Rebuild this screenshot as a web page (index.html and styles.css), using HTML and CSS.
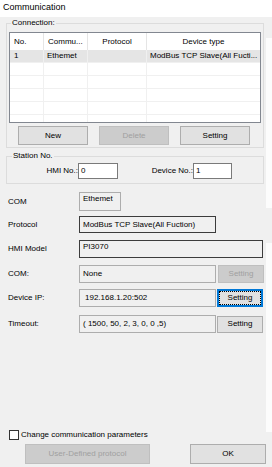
FILE: index.html
```html
<!DOCTYPE html>
<html>
<head>
<meta charset="utf-8">
<link rel="stylesheet" href="styles.css">
</head>
<body>
<div class="title">Communication</div>

<section class="group conn">
  <div class="group-label">Connection:</div>
  <div class="list">
    <div class="lrow head"><span>No.</span><span>Commu...</span><span class="center">Protocol</span><span class="center">Device type</span></div>
    <div class="lrow sel"><span>1</span><span>Ethemet</span><span></span><span>ModBus TCP Slave(All Fucti...</span></div>
    <div class="lrow"><span></span><span></span><span></span><span></span></div>
    <div class="lrow"><span></span><span></span><span></span><span></span></div>
    <div class="lrow"><span></span><span></span><span></span><span></span></div>
    <div class="lrow"><span></span><span></span><span></span><span></span></div>
    <div class="lrow"><span></span><span></span><span></span><span></span></div>
  </div>
  <div class="btn-row">
    <button class="btn">New</button>
    <button class="btn" disabled>Delete</button>
    <button class="btn">Setting</button>
  </div>
</section>

<section class="group station">
  <div class="group-label">Station No.</div>
  <div class="station-row">
    <span class="st-label st-hmi">HMI No.:</span>
    <span class="input in-hmi">0</span>
    <span class="st-label st-dev">Device No.:</span>
    <span class="input in-dev">1</span>
  </div>
</section>

<div class="form">
  <div class="frow r1"><span class="lbl">COM</span><span class="box top w-com">Ethemet</span></div>
  <div class="frow r2"><span class="lbl">Protocol</span><span class="box dark w-mid h17">ModBus TCP Slave(All Fuction)</span></div>
  <div class="frow r3"><span class="lbl">HMI Model</span><span class="box dark top w-full">PI3070</span></div>
  <div class="frow r4"><span class="lbl">COM:</span><span class="box w-mid">None</span><button class="btn sbtn" disabled>Setting</button></div>
  <div class="frow r5"><span class="lbl">Device IP:</span><span class="box w-mid ip">192.168.1.20:502</span><button class="btn sbtn focus"><span class="focus-in">Setting</span></button></div>
  <div class="frow r6"><span class="lbl">Timeout:</span><span class="box w-mid">( 1500, 50, 2, 3, 0, 0 ,5)</span><button class="btn sbtn small">Setting</button></div>
</div>

<div class="bottom">
  <label class="check-row"><span class="check"></span><span>Change communication parameters</span></label>
  <div class="bottom-btns">
    <button class="btn btn-user" disabled>User-Defined protocol</button>
    <button class="btn btn-ok">OK</button>
  </div>
</div>
</body>
</html>
```

FILE: styles.css
```css
* { box-sizing: border-box; }

body {
  margin: 0;
  width: 272px;
  height: 467px;
  overflow: hidden;
  display: flex;
  flex-direction: column;
  font-family: "Liberation Sans", Arial, sans-serif;
  font-size: 8px;
  line-height: 1;
  color: #000;
  background-color: #f0f0f0;
  background-image: linear-gradient(#fcfcfc, #fcfcfc), linear-gradient(#fcfcfc, #fcfcfc);
  background-size: 6px 170px, 6px 189px;
  background-position: 266px 38px, 266px 243px;
  background-repeat: no-repeat;
}

.title {
  height: 17px;
  flex: none;
  background: #fff;
  padding-left: 3px;
  font-size: 9px;
  line-height: 14px;
}

.group {
  flex: none;
  margin-left: 6px;
  width: 258px;
  border: 1px solid #dcdcdc;
}

.group-label {
  width: max-content;
  height: 10px;
  line-height: 10px;
  margin: -6px 0 0 4px;
  padding: 0 1px;
  background: #f0f0f0;
}

.conn {
  margin-top: 6px;
  padding-bottom: 2px;
}

.list {
  margin: 4px 0 0 2px;
  width: 252px;
  height: 91px;
  border: 1px solid #828790;
  background: #fff;
  overflow: hidden;
}

.lrow {
  display: grid;
  grid-template-columns: 34px 44px 59px 113px;
  height: 13px;
  border-bottom: 1px solid #f0f0f0;
}

.lrow > span {
  border-right: 1px solid #f0f0f0;
  padding-left: 4px;
  line-height: 12px;
  white-space: nowrap;
  overflow: hidden;
}

.lrow > span:last-child { border-right: none; padding-left: 3px; }

.lrow.head {
  height: 17px;
  border-bottom: none;
}

.lrow.head > span {
  line-height: 17px;
  border-right-color: #e5e5e5;
}

.lrow > span.center { text-align: center; padding-left: 0; }

.lrow.sel { background: #e5e5e5; }
.lrow.sel > span:nth-child(2) { padding-left: 3px; }

.btn {
  height: 19px;
  width: 70px;
  padding: 0;
  border: 1px solid #adadad;
  background: #e1e1e1;
  font: inherit;
  color: #000;
}

.btn:disabled {
  background: #cccccc;
  border-color: #bfbfbf;
  color: #a0a0a0;
}

.btn-row {
  display: flex;
  gap: 11px;
  margin-top: 3px;
  padding-left: 11px;
}

.station {
  margin-top: 8px;
  padding-bottom: 4px;
}

.station .group-label { margin-left: 5px; }

.station-row {
  display: flex;
  align-items: center;
  margin-top: 2px;
  height: 16px;
}

.st-label { text-align: right; }
.st-hmi { width: 71px; }
.st-dev { width: 75px; }

.input {
  height: 16px;
  border: 1px solid #7a7a7a;
  background: #fff;
  padding-left: 2px;
  display: flex;
  align-items: center;
}
.in-hmi { width: 40px; }
.in-dev { width: 39px; }

.form {
  flex: none;
  padding-left: 8px;
}

.frow {
  display: flex;
  align-items: center;
}

.frow .lbl { width: 71px; }

.r1 { margin-top: 8px; }
.r2 { margin-top: 5px; }
.r3 { margin-top: 7px; }
.r4 { margin-top: 7px; }
.r5 { margin-top: 6px; }
.r6 { margin-top: 8px; }

.box {
  height: 18px;
  border: 1px solid #adadad;
  padding-left: 3px;
  display: flex;
  align-items: center;
  white-space: nowrap;
}

.box.dark { border-color: #3c3c3c; }
.box.top { align-items: flex-start; padding-top: 2px; }
.box.h17 { height: 17px; }
.box.ip { padding-left: 5px; }

.w-com { width: 42px; height: 19px; }
.w-mid { width: 137px; }
.w-full { width: 184px; }

.sbtn {
  width: 46px;
  height: 18px;
  margin-left: 2px;
}

.sbtn.small { height: 17px; margin-left: 1px; }

.sbtn.focus {
  margin-left: 1px;
  border: 2px solid #0078d7;
  padding: 0;
  display: flex;
}

.focus-in {
  flex: 1;
  border: 1px dotted #000;
  display: flex;
  align-items: center;
  justify-content: center;
}

.bottom {
  margin-top: auto;
  padding: 0 0 3px 9px;
}

.check-row {
  display: flex;
  align-items: center;
  gap: 2px;
  height: 10px;
}

.check {
  width: 10px;
  height: 10px;
  border: 1px solid #333;
  background: #fff;
}

.bottom-btns {
  display: flex;
  gap: 40px;
  margin-top: 4px;
  padding-left: 16px;
}

.btn-user { width: 125px; height: 20px; }
.btn-ok { width: 76px; height: 20px; }
```
